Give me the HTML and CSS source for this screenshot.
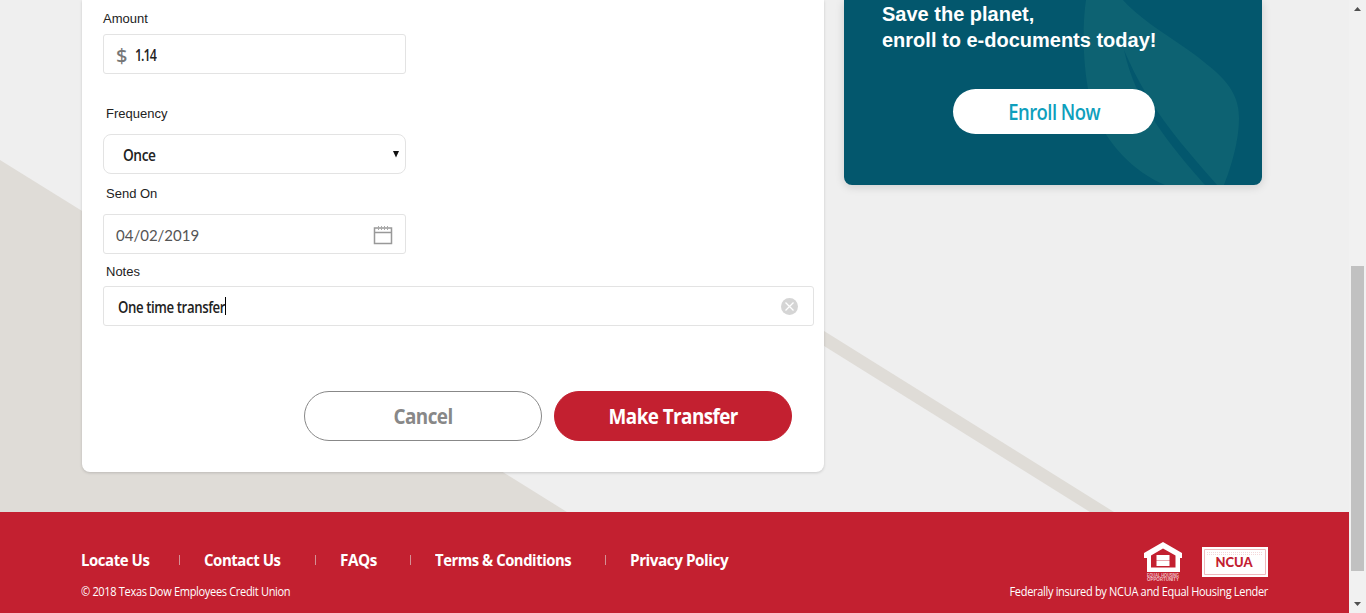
FILE: index.html
```html
<!DOCTYPE html>
<html lang="en">
<head>
<meta charset="utf-8">
<title>Transfer</title>
<link rel="stylesheet" href="styles.css">
</head>
<body>
<div class="page">
  <main class="main">
    <svg class="backdrop" viewBox="0 0 1349 512" aria-hidden="true">
      <path d="M0 160L567 512H0z"/>
      <path d="M800 316L1114 512H1090L800 331z"/>
    </svg>
    <section class="card">
      <label class="label label-amount">Amount</label>
      <div class="field field-amount"><span class="currency">$</span><span class="t t-amount">1.14</span></div>
      <label class="label label-frequency">Frequency</label>
      <div class="field field-select"><span class="t t-once">Once</span>
        <svg class="caret" width="6" height="7" viewBox="0 0 6 7"><path d="M0 0h6L3 6.500z"/></svg>
      </div>
      <label class="label label-date">Send On</label>
      <div class="field field-date"><span class="date">04/02/2019</span>
        <svg class="calendar" width="20" height="20" viewBox="0 0 20 20"><path d="M1.500 3h17v15.500h-17zM1.500 7.500h17"/><path class="rings" d="M5.500 1v4M8.500 1v4M11.500 1v4M14.500 1v4"/></svg>
      </div>
      <label class="label label-notes">Notes</label>
      <div class="field field-notes"><span class="t t-notes">One time transfer</span><span class="cursor"></span>
        <svg class="clear" width="17" height="17" viewBox="0 0 17 17"><circle cx="8.500" cy="8.500" r="8.500"/><path d="M4.500 4.500l8 8M12.500 4.500l-8 8"/></svg>
      </div>
      <div class="actions">
        <button class="button cancel"><span class="t t-cancel">Cancel</span></button>
        <button class="button submit"><span class="t t-submit">Make Transfer</span></button>
      </div>
    </section>
    <aside class="promo">
      <svg class="leaf" viewBox="0 0 418 185" aria-hidden="true">
        <path d="M242 0H279C300 24 340 44 365 66C389 85 395 101 395 118C395 143 386 170 380 185H373C344 151 306 112 280 50C292 105 326 145 361 185H321C288 171 264 144 250 112C240 84 237 34 242 0z"/>
      </svg>
      <h2 class="promo-title">Save the planet,<br>enroll to e-documents today!</h2>
      <button class="enroll"><span class="t t-enroll">Enroll Now</span></button>
    </aside>
  </main>
  <footer class="footer">
    <div class="footer-left">
      <nav class="links">
        <a class="link l1"><span class="t">Locate Us</span></a>
        <a class="link l2"><span class="t">Contact Us</span></a>
        <a class="link l3"><span class="t">FAQs</span></a>
        <a class="link l4"><span class="t">Terms &amp; Conditions</span></a>
        <a class="link l5"><span class="t">Privacy Policy</span></a>
      </nav>
      <div class="small"><span class="t t-copy">© 2018 Texas Dow Employees Credit Union</span></div>
    </div>
    <div class="footer-right">
      <div class="badges">
        <svg width="38" height="41" viewBox="0 0 38 41">
          <path fill="#fff" fill-rule="evenodd" d="M19 0L38 11V16H36V30H3V16H0V11zM19 6.500L7 13.500V25.500H31.500V13.500z"/>
          <path fill="#fff" d="M12.500 13h13v5h-13zM12.500 19h13v5h-13z"/>
          <path fill="#fff" opacity=".6" d="M12.500 18h13v1h-13z"/>
          <text class="housing" x="3" y="35" textLength="32" lengthAdjust="spacingAndGlyphs">EQUAL HOUSING</text>
          <text class="housing" x="3" y="39" textLength="32" lengthAdjust="spacingAndGlyphs">OPPORTUNITY</text>
        </svg>
        <svg class="ncua-badge" width="66" height="30" viewBox="0 0 66 30">
          <path fill="#fff" d="M0 0h66v30H0z"/>
          <path class="ncua-frame" d="M2.500 2.500h61v25h-61z"/>
          <path class="ncua-dots" d="M5 5.500h56M5 7.500h56"/>
          <text class="ncua" x="13.500" y="19.500" textLength="37" lengthAdjust="spacingAndGlyphs">NCUA</text>
        </svg>
      </div>
      <div class="small"><span class="t t-fed">Federally insured by NCUA and Equal Housing Lender</span></div>
    </div>
  </footer>
</div>
<div class="scrollbar">
  <svg width="7" height="4" viewBox="0 0 7 4"><path d="M0 4h7L3.500 0z"/></svg>
  <div class="thumb"></div>
  <svg width="7" height="4" viewBox="0 0 7 4"><path d="M0 0h7L3.500 4z"/></svg>
</div>
</body>
</html>
```
FILE: styles.css
```css
* { box-sizing: border-box; }
body { margin: 0; width: 1366px; height: 613px; overflow: hidden; display: flex; background: #efefef; font-family: "Liberation Sans", Arial, sans-serif; color: #222; }
.page { width: 1349px; display: flex; flex-direction: column; }
.main { position: relative; height: 512px; padding-left: 82px; display: flex; align-items: flex-start; gap: 20px; }
.backdrop { position: absolute; inset: 0; width: 1349px; height: 512px; fill: #dfdcd7; }

.card { position: relative; width: 742px; height: 472px; padding: 11px 10px 0 21px; background: #fff; border-radius: 0 0 8px 8px; box-shadow: 0 1px 3px rgba(0,0,0,.16); display: flex; flex-direction: column; }
.label { height: 16px; font-size: 13px; line-height: 16px; padding-left: 3px; }
.label-amount { padding-left: 0; margin-bottom: 7px; }
.label-frequency { margin: 32px 0 12px; height: 16px; }
.label-date { margin: 12px 0 12px; }
.label-notes { margin: 10px 0 6px; }
.field { width: 303px; height: 40px; flex: none; border: 1px solid #e3e3e3; border-radius: 3px; display: flex; align-items: center; color: #222; }

/* Narrowed sans face used for values, buttons and footer text */
.t { display: inline-block; white-space: nowrap; font-family: "Open Sans", "Noto Sans", sans-serif; letter-spacing: -.03em; transform: scaleX(.92); transform-origin: 0 50%; }
.t-amount, .t-once, .t-notes { font-size: 16px; font-weight: 600; }
.t-amount { transform: scaleX(.78); letter-spacing: -1.3px; padding-top: 2px; }
.t-once { transform: scaleX(.855); padding-top: 1px; }
.t-notes { transform: scaleX(.825); margin-right: -23px; padding-top: 1px; }
.t-cancel, .t-submit, .t-enroll { transform-origin: 50% 50%; }
.t-enroll { transform: scaleX(.88); }

.currency { margin-left: 12px; width: 19px; padding-top: 2px; font: 500 20px "Noto Sans", sans-serif; color: #777; }
.field-select { border-radius: 8px; padding: 0 6px 0 19px; justify-content: space-between; }
.caret { fill: #111; }
.field-date { padding: 1px 12px 0; justify-content: space-between; }
.date { font: 15px Lato, sans-serif; color: #555; }
.calendar { fill: none; stroke: #999; stroke-width: 1.5; }
.rings { stroke: #aaa; stroke-width: 1; }
.field-notes { width: 711px; padding: 0 15px 0 14px; }
.cursor { width: 1px; height: 18px; background: #000; }
.clear { margin-left: auto; fill: #d5d5d5; stroke: none; }
.clear path { stroke: #fff; stroke-width: 1.3; }
.actions { display: flex; gap: 12px; margin: 65px 0 0 201px; }
.button { width: 238px; height: 50px; padding: 0; border: 1px solid #888; border-radius: 25px; background: #fff; color: #888; font-size: 20.5px; font-weight: 700; }
.submit { background: #c32030; border-color: #c32030; color: #fff; }

.promo { position: relative; width: 418px; height: 185px; padding: 1px 0 0 38px; background: #03576d; border-radius: 0 0 8px 8px; box-shadow: 0 2px 10px rgba(0,0,0,.14); overflow: hidden; }
.leaf { position: absolute; inset: 0; fill: #0d6272; }
.promo-title { position: relative; margin: 0; color: #fff; font-size: 20px; line-height: 26px; }
.enroll { position: relative; display: block; width: 202px; height: 45px; margin: 36px 0 0 71px; padding: 1px 0 0; border: 0; border-radius: 23px; background: #fff; color: #0f9fbd; font-size: 21px; font-weight: 600; }

.footer { height: 101px; padding: 30px 81px 0 81px; display: flex; justify-content: space-between; background: #c32030; color: #fff; }
.links { display: flex; height: 36px; align-items: center; font-size: 16px; font-weight: 700; }
.link { display: flex; align-items: center; }
.link .t { transform: scaleX(.935); }
.link::after { content: ""; width: 1px; height: 10px; background: #d59095; margin-left: auto; }
.l1 { width: 99px; margin-right: 24px; }
.l2 { width: 112px; margin-right: 24px; }
.l3 { width: 71px; margin-right: 24px; }
.l4 { width: 171px; margin-right: 24px; }
.l3 .t, .l5 .t { transform: scaleX(.955); }
.l4 .t { transform: scaleX(.925); }
.l5::after { display: none; }
.small { font-size: 12px; line-height: 16px; }
.footer-left .small { margin-top: 6px; }
.footer-right { display: flex; flex-direction: column; align-items: flex-end; }
.t-fed { transform-origin: 100% 50%; }
.badges { display: flex; align-items: center; gap: 20px; height: 41px; margin-bottom: 1px; }
.badges svg { display: block; overflow: visible; }
.badges .ncua-badge { margin-top: -2px; }
.housing { font: bold 4.500px "Liberation Sans", sans-serif; fill: #f0c5ca; }
.ncua { font: 900 13px Lato, sans-serif; fill: #c32030; }
.ncua-frame { fill: none; stroke: #efb8bd; }
.ncua-dots { stroke: #f5d8da; stroke-width: 1; stroke-dasharray: 1 1; }

.scrollbar { width: 17px; background: #f1f1f1; display: flex; flex-direction: column; align-items: center; padding: 7px 0; }
.scrollbar svg { fill: #505050; flex: none; }
.thumb { width: 13px; height: 305px; margin: 255px 0 auto; background: #c1c1c1; }
```
